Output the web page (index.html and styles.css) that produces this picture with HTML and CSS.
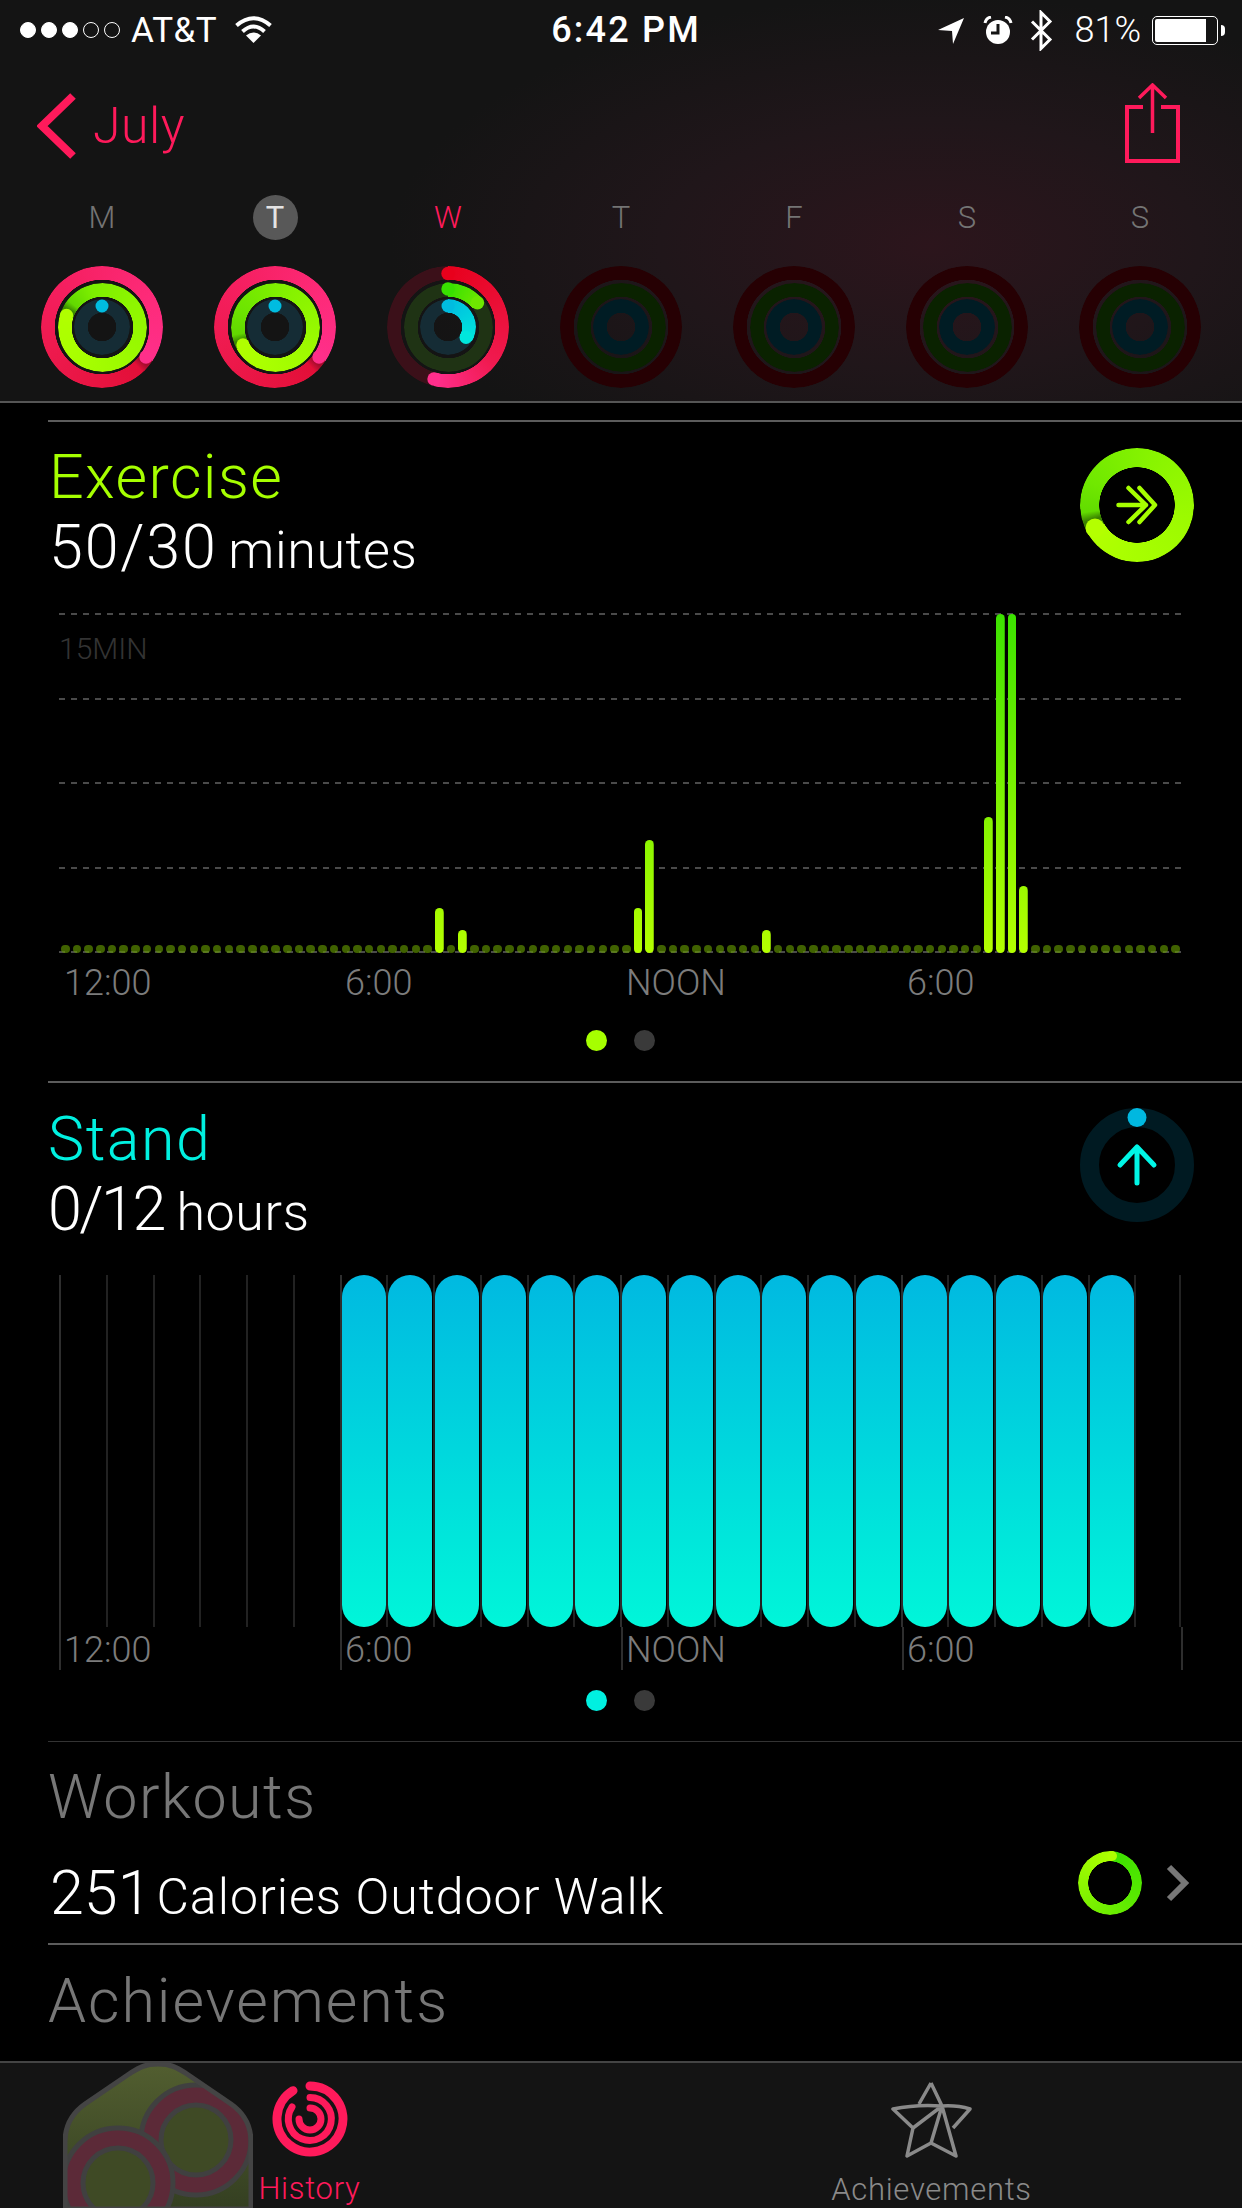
FILE: index.html
```html
<!DOCTYPE html>
<html lang="en">
<head>
<meta charset="utf-8">
<title>Activity</title>
<link rel="stylesheet" href="styles.css">
</head>
<body>
<div class="page">
  <header class="top">
    <div class="status">
      <div class="status-left">
        <span class="sig on"></span><span class="sig on"></span><span class="sig on"></span><span class="sig"></span><span class="sig"></span>
        <span class="carrier">AT&amp;T</span>
        <svg class="wifi" width="37" height="27" viewBox="0 0 37 27"><path d="M1.5 9.5Q18.5-5 35.5 9.5M7.5 15.5Q18.5 5.5 29.5 15.5" fill="none" stroke="#fff" stroke-width="4"/><path d="M18.5 27L11 19.5Q18.5 13.5 26 19.5Z" fill="#fff"/></svg>
      </div>
      <div class="clock">6:42 PM</div>
      <div class="status-right">
        <svg class="loc" width="26" height="26" viewBox="0 0 26 26"><path d="M0 12L26 0L15 26L14 13Z" fill="#fff"/></svg>
        <svg class="alarm" width="30" height="28" viewBox="0 0 30 28"><circle cx="15" cy="16" r="12" fill="#fff"/><path d="M15 8V17H8" fill="none" stroke="#141414" stroke-width="3"/><path d="M2 7Q3 2 8 1M28 7Q27 2 22 1" fill="none" stroke="#fff" stroke-width="3"/></svg>
        <svg class="bt" width="23" height="41" viewBox="0 0 23 41"><path d="M2 11.5L20 29.5L11 38.5V2.5L20 11.5L2 29.5" fill="none" stroke="#fff" stroke-width="3"/></svg>
        <span class="pct">81%</span>
        <div class="batt"><div class="batt-fill"></div></div>
      </div>
    </div>
    <nav class="nav">
      <div class="back">
        <svg width="44" height="70" viewBox="0 0 44 70"><path d="M36 5L5 35L36 65" fill="none" stroke="#ff1a5b" stroke-width="8" stroke-linejoin="miter"/></svg>
        <span class="month">July</span>
      </div>
      <svg class="share" width="59" height="84" viewBox="0 0 59 84"><path d="M20 24H4V78H55V24H38" fill="none" stroke="#ff1a5b" stroke-width="4"/><path d="M29.500 2V50M16 15L29.500 2L43 15" fill="none" stroke="#ff1a5b" stroke-width="3.500"/></svg>
    </nav>
    <div class="week">
      <div class="day">
        <div class="letter">M</div>
        <div class="rings">
          <div class="ring r1 red-m"></div><div class="ring r2 green-m"></div><div class="ring r3 blue-dim"></div>
          <svg class="caps" viewBox="0 0 122 122"><circle cx="105" cy="91" r="6.700" fill="#ff2f8a"/><circle cx="25.500" cy="49.500" r="6.700" fill="#b0ff00"/><circle cx="61" cy="40" r="6.500" fill="#00bce0"/></svg>
        </div>
      </div>
      <div class="day">
        <div class="letter current">T</div>
        <div class="rings">
          <div class="ring r1 red-m"></div><div class="ring r2 green-t"></div><div class="ring r3 blue-dim"></div>
          <svg class="caps" viewBox="0 0 122 122"><circle cx="105" cy="91" r="6.700" fill="#ff2f8a"/><circle cx="29" cy="79" r="6.700" fill="#b0ff00"/><circle cx="61" cy="40" r="6.500" fill="#00bce0"/></svg>
        </div>
      </div>
      <div class="day">
        <div class="letter today">W</div>
        <div class="rings">
          <div class="ring r1 dim-red-w"></div><div class="ring r2 dim-green-w"></div><div class="ring r3 blue-dim"></div>
          <div class="ring r1 red-w"></div><div class="ring r2 green-w"></div><div class="ring r3 blue-w"></div>
          <svg class="caps" viewBox="0 0 122 122"><circle cx="61" cy="7.500" r="6.700" fill="#e8001c"/><circle cx="47" cy="113" r="6.700" fill="#ff2e8c"/><circle cx="61" cy="23" r="6.700" fill="#38e000"/><circle cx="90.500" cy="36.800" r="6.700" fill="#6ee800"/><circle cx="61" cy="40" r="6.500" fill="#00bce0"/><circle cx="79" cy="71.500" r="6.500" fill="#00e6dc"/></svg>
        </div>
      </div>
      <div class="day"><div class="letter">T</div><div class="rings"><div class="ring r1 off-red"></div><div class="ring r2 off-green"></div><div class="ring r3 off-blue"></div></div></div>
      <div class="day"><div class="letter">F</div><div class="rings"><div class="ring r1 off-red"></div><div class="ring r2 off-green"></div><div class="ring r3 off-blue"></div></div></div>
      <div class="day"><div class="letter">S</div><div class="rings"><div class="ring r1 off-red"></div><div class="ring r2 off-green"></div><div class="ring r3 off-blue"></div></div></div>
      <div class="day"><div class="letter">S</div><div class="rings"><div class="ring r1 off-red"></div><div class="ring r2 off-green"></div><div class="ring r3 off-blue"></div></div></div>
    </div>
  </header>

  <main class="content">
    <section class="panel exercise">
      <div class="head">
        <div>
          <div class="title lime">Exercise</div>
          <div class="value"><span>50/30</span> <span class="unit">minutes</span></div>
        </div>
        <div class="badge-ring">
          <div class="ring big lime-ring"></div>
          <svg class="caps" viewBox="0 0 114 114"><circle cx="15" cy="80" r="9.500" fill="#b4ff00"/><path d="M38.500 57H66M48.500 40L66 57L48.500 74M59.500 40L75 57L59.500 74" fill="none" stroke="#a6ff00" stroke-width="4.500" stroke-linecap="round" stroke-linejoin="round"/></svg>
        </div>
      </div>
      <div class="plot">
        <div class="gridlines"><i></i><i></i><i></i><i></i><i></i></div>
        <div class="scale">15MIN</div>
        <div class="bars"><b></b><b></b><b></b><b></b><b></b><b></b><b></b><b></b><b></b><b></b><b></b><b></b><b></b><b></b><b></b><b></b><b></b><b></b><b></b><b></b><b></b><b></b><b></b><b></b><b></b><b></b><b></b><b></b><b></b><b></b><b></b><b></b><b class="act" style="height:45px"></b><b></b><b class="act" style="height:23px"></b><b></b><b></b><b></b><b></b><b></b><b></b><b></b><b></b><b></b><b></b><b></b><b></b><b></b><b></b><b class="act" style="height:45px"></b><b class="act" style="height:113px"></b><b></b><b></b><b></b><b></b><b></b><b></b><b></b><b></b><b></b><b class="act" style="height:23px"></b><b></b><b></b><b></b><b></b><b></b><b></b><b></b><b></b><b></b><b></b><b></b><b></b><b></b><b></b><b></b><b></b><b></b><b></b><b class="act" style="height:136px"></b><b class="act" style="height:339px"></b><b class="act" style="height:339px"></b><b class="act" style="height:67px"></b><b></b><b></b><b></b><b></b><b></b><b></b><b></b><b></b><b></b><b></b><b></b><b></b><b></b></div>
      </div>
      <div class="labels plain"><span>12:00</span><span>6:00</span><span>NOON</span><span>6:00</span></div>
      <div class="pager"><i class="dot-lime"></i><i></i></div>
    </section>

    <section class="panel stand">
      <div class="head">
        <div>
          <div class="title cyan">Stand</div>
          <div class="value"><span class="ratio">0/12</span> <span class="unit">hours</span></div>
        </div>
        <svg class="stand-icon" width="114" height="114" viewBox="0 0 114 114"><circle cx="57" cy="57" r="47.500" fill="none" stroke="#001a22" stroke-width="19"/><circle cx="57" cy="9.500" r="9.500" fill="#00b8e0"/><path d="M57 75V39M40 57L57 39L74 57" fill="none" stroke="#00f6e6" stroke-width="5" stroke-linecap="round" stroke-linejoin="round"/></svg>
      </div>
      <div class="hours">
        <i class="major"></i><i></i><i></i><i></i><i></i><i></i>
        <i class="major"><u></u></i><i><u></u></i><i><u></u></i><i><u></u></i><i><u></u></i><i><u></u></i>
        <i class="major"><u></u></i><i><u></u></i><i><u></u></i><i><u></u></i><i><u></u></i><i><u></u></i>
        <i class="major"><u></u></i><i><u></u></i><i><u></u></i><i><u></u></i><i><u></u></i><i></i>
      </div>
      <div class="labels ticked"><span>12:00</span><span>6:00</span><span>NOON</span><span>6:00</span></div>
      <div class="pager tight"><i class="dot-cyan"></i><i></i></div>
    </section>

    <section class="panel workouts">
      <div class="title muted">Workouts</div>
      <div class="workout-row">
        <div class="value tightv"><span>251</span> <span class="unit">Calories Outdoor Walk</span></div>
        <div class="workout-end">
          <div class="badge-ring small">
            <div class="ring thin walk-ring"></div>
            <svg class="caps" viewBox="0 0 64 64"><circle cx="34" cy="5" r="5" fill="#aeff00"/></svg>
          </div>
          <svg class="chev" width="24" height="38" viewBox="0 0 24 38"><path d="M3 3L19 19L3 35" fill="none" stroke="#777" stroke-width="6"/></svg>
        </div>
      </div>
    </section>

    <section class="panel achievements">
      <div class="title muted">Achievements</div>
    </section>
  </main>

  <footer class="tabs">
    <svg class="medal" width="190" height="147" viewBox="0 0 190 147">
      <defs>
        <linearGradient id="olive" x1="0" y1="0" x2="0" y2="1"><stop offset="0" stop-color="#525e30"/><stop offset="1" stop-color="#343f21"/></linearGradient>
        <clipPath id="hexclip"><path d="M95 2C110 2 116 7 124 12L168 42Q188 56 188 80V147H2V80Q2 56 22 42L66 12C74 7 80 2 95 2Z"/></clipPath>
      </defs>
      <path d="M95 2C110 2 116 7 124 12L168 42Q188 56 188 80V147H2V80Q2 56 22 42L66 12C74 7 80 2 95 2Z" fill="url(#olive)"/>
      <g clip-path="url(#hexclip)">
        <circle cx="133" cy="78" r="45" fill="#3f4a25" stroke="#404040" stroke-width="25"/>
        <circle cx="133" cy="78" r="45" fill="none" stroke="#5c2a38" stroke-width="15"/>
        <circle cx="55" cy="121" r="45" fill="#3f4a25" stroke="#404040" stroke-width="25"/>
        <circle cx="55" cy="121" r="45" fill="none" stroke="#5c2a38" stroke-width="15"/>
      </g>
      <path d="M95 2C110 2 116 7 124 12L168 42Q188 56 188 80V147H2V80Q2 56 22 42L66 12C74 7 80 2 95 2Z" fill="none" stroke="#444" stroke-width="5"/>
    </svg>
    <div class="tab active">
      <svg width="76" height="76" viewBox="0 0 76 76"><g fill="none" stroke="#ff1a5b" stroke-linecap="round"><path d="M38 5A33 33 0 1 1 21 9.700" stroke-width="9"/><path d="M38 16.500A21.500 21.500 0 1 1 20 26" stroke-width="7"/><path d="M38 27A11 11 0 1 1 27 38" stroke-width="7"/></g></svg>
      <span>History</span>
    </div>
    <div class="tab">
      <svg width="81" height="77" viewBox="0 0 81 77"><path d="M40 2L28 23M40 2L51 25L65 75L40 62L16 75L22 47L2 28Q26 23 51 25Q66 24 79 28L62 47M51 25L22 47M51 25L40 62" fill="none" stroke="#8a8a8a" stroke-width="3.500" stroke-linejoin="round"/></svg>
      <span>Achievements</span>
    </div>
  </footer>
</div>
</body>
</html>
```

FILE: styles.css
```css
* { box-sizing: border-box; }
html, body { margin: 0; padding: 0; background: #000; }
body { font-family: Roboto, "Liberation Sans", sans-serif; color: #fff; width: 1242px; height: 2208px; overflow: hidden; }
.page { display: flex; flex-direction: column; width: 1242px; height: 2208px; }

/* Header */
.top {
  height: 403px;
  border-bottom: 2px solid #555;
  background: radial-gradient(ellipse 540px 250px at 930px 245px, #2c151c 0%, #20161a 50%, #141414 100%), #141414;
}
.status { display: grid; grid-template-columns: 1fr auto 1fr; align-items: center; height: 60px; padding: 0 24px 0 20px; font-size: 36px; }
.status-left, .status-right { display: flex; align-items: center; }
.status-right { justify-content: flex-end; }
.sig { width: 16px; height: 16px; border-radius: 50%; border: 1.5px solid #fff; margin-right: 5px; }
.sig.on { background: #fff; }
.carrier { margin-left: 6px; font-size: 35px; font-weight: 400; letter-spacing: .5px; }
.wifi { margin-left: 18px; margin-top: -1px; }
.clock { font-weight: 500; font-size: 36px; letter-spacing: 2.2px; padding-left: 14px; }
.loc { margin-right: 19px; margin-top: 1px; }
.alarm { margin-right: 17px; }
.bt { margin-right: 21px; }
.pct { font-weight: 300; margin-right: 11px; }
.batt { position: relative; width: 66px; height: 29px; border: 1.5px solid #fff; border-radius: 5px; padding: 2px; }
.batt::after { content: ""; position: absolute; right: -8px; top: 8px; width: 4px; height: 11px; background: #fff; border-radius: 0 4px 4px 0; }
.batt-fill { width: 51px; height: 100%; background: #fff; border-radius: 2px 0 0 2px; }

.nav { display: flex; justify-content: space-between; height: 130px; padding: 21px 60px 0 37px; }
.back { display: flex; align-items: flex-start; }
.back svg { margin-top: 10px; }
.month { color: #ff1a5b; font-size: 50px; font-weight: 300; line-height: 56px; margin: 17px 0 0 12px; letter-spacing: .5px; }
.share { margin-top: 2px; }

.week { display: grid; grid-template-columns: repeat(7, 173px); padding: 5px 0 0 15.5px; }
.day { display: flex; flex-direction: column; align-items: center; }
.letter { width: 45px; height: 45px; border-radius: 50%; font-size: 31px; font-weight: 300; line-height: 45px; text-align: center; color: #747474; }
.letter.current { background: #585858; color: #e4e4e4; font-weight: 400; }
.letter.today { color: #ff1a5b; font-weight: 300; }

/* Rings */
.rings { position: relative; width: 122px; height: 122px; margin-top: 26px; }
.ring {
  --t: 13.5px;
  position: absolute;
  border-radius: 50%;
  -webkit-mask: radial-gradient(closest-side, transparent calc(100% - var(--t) - .5px), #000 calc(100% - var(--t)));
  mask: radial-gradient(closest-side, transparent calc(100% - var(--t) - .5px), #000 calc(100% - var(--t)));
}
.r1 { inset: 0; }
.r2 { inset: 16.5px; }
.r3 { inset: 33px; }
.caps { position: absolute; inset: 0; width: 100%; height: 100%; }

.red-m { background: conic-gradient(from 124deg, #a50c2c 0deg 7deg, #e30f38 14deg, #ee1a4e 125deg, #f51f60 195deg, #fd2a78 290deg, #ff2f8a 360deg); }
.green-m { background: conic-gradient(from 288deg, #3c8a00 0deg 10deg, #62d800 20deg, #7cee00 55deg, #8ef600 125deg, #9cfa00 215deg, #aaff00 305deg, #b0ff00 360deg); }
.green-t { background: conic-gradient(from 240deg, #3c8a00 0deg 10deg, #62d800 20deg, #6ce400 55deg, #86f200 145deg, #9cfa00 235deg, #aaff00 315deg, #b0ff00 360deg); }
.blue-dim { background: #152c35; }
.dim-red-w { background: #3b1019; }
.dim-green-w { background: #1f3314; }
.red-w { background: conic-gradient(#e8001c 0deg, #ea1038 70deg, #f01a50 130deg, #ff2e8c 193deg, transparent 193deg); }
.green-w { background: conic-gradient(#38e000 0deg, #6ee800 51deg, transparent 51deg); }
.blue-w { background: conic-gradient(#00bce0 0deg, #00e6dc 121deg, transparent 121deg); }
.off-red { background: #260003; }
.off-green { background: #0a2200; }
.off-blue { background: #001c24; }

/* Panels */
.content { padding: 17px 0 0 48px; }
.panel { border-top: 2px solid #5c5c5c; }
.head { display: flex; justify-content: space-between; align-items: flex-start; padding: 20px 48px 0 0; }
.stand .head { padding-top: 21px; }
.title, .value { font-size: 61px; font-weight: 300; height: 70px; line-height: 70px; letter-spacing: 1.5px; white-space: nowrap; }
.value { letter-spacing: 1.8px; }
.lime { color: #a6ff00; padding-left: 1px; letter-spacing: 1.4px; }
.cyan { color: #00f0e0; }
.muted { color: #777; }
.achievements .title { letter-spacing: 1.9px; }
.value .unit { font-size: 52px; margin-left: -6px; letter-spacing: .6px; }
.value .ratio { letter-spacing: -2.5px; }
.stand .value .unit { margin-left: -4px; }
.exercise .value { padding-left: 1px; }
.badge-ring { position: relative; width: 114px; height: 114px; margin-top: 6px; }
.ring.big { --t: 19px; inset: 0; }
.lime-ring { background: conic-gradient(from 241deg, #3a8000 0deg 11deg, #62dc00 21deg, #70e800 55deg, #88f400 137deg, #9cfa00 223deg, #aaff00 317deg, #b4ff00 360deg); }
.stand-icon { margin-top: 4px; }

.plot { display: grid; width: 1122px; height: 340px; margin: 31px 0 0 11px; }
.plot > * { grid-area: 1 / 1; }
.gridlines { display: flex; flex-direction: column; justify-content: space-between; }
.gridlines i { display: block; height: 2px; background: repeating-linear-gradient(90deg, #4a4a4a 0 6px, transparent 6px 12px); }
.scale { align-self: start; margin-top: 18px; font-size: 30px; font-weight: 300; line-height: 36px; color: #333; }
.bars { display: flex; justify-content: space-between; align-items: flex-end; padding: 0 0 0 2px; }
.bars b { display: block; width: 8.5px; height: 8px; border-radius: 4.5px; background: rgba(98,150,0,.65); }
.bars b.act { background: linear-gradient(to top, #b4ff00, #3ce200) bottom / 100% 339px no-repeat; }

.labels { display: grid; grid-template-columns: repeat(4, 281px); width: 1124px; margin-left: 11px; font-size: 36px; font-weight: 300; color: #7c7c7c; line-height: 42px; }
.labels.plain { margin-top: 9px; }
.labels.plain span { padding-left: 5px; }
.labels.ticked span { border-left: 2px solid #2e2e2e; height: 43px; padding-left: 3px; line-height: 47px; }
.labels.ticked span:last-child { border-right: 2px solid #2e2e2e; }

.pager { display: flex; gap: 27px; padding: 26px 0 30px 537.5px; }
.pager i { display: block; width: 21px; height: 21px; border-radius: 50%; background: #3a3a3a; }
.pager .dot-lime { background: #a6ff00; }
.pager .dot-cyan { background: #00f0e0; }
.pager.tight { padding-top: 20px; padding-bottom: 30px; }

.hours { display: grid; grid-template-columns: repeat(24, 46.75px); width: 1122px; height: 352px; margin: 31px 0 0 11px; }
.hours i { display: block; border-left: 2px solid #222; }
.hours i.major { border-left-color: #2e2e2e; }
.hours i:last-child { border-right: 2px solid #222; }
.hours u { display: block; height: 100%; margin-right: .75px; border-radius: 23px; background: linear-gradient(#00b9e1, #00f6d9); }

.workouts { border-top: 1px solid #333; padding-top: 20px; }
.workout-row { display: flex; justify-content: space-between; align-items: flex-start; margin-top: 26px; padding: 0 52px 15px 0; }
.tightv { padding-left: 2px; letter-spacing: 0; }
.value.tightv .unit { font-size: 50px; margin-left: -10px; letter-spacing: 1px; }
.workout-end { display: flex; align-items: center; margin-top: -7px; }
.badge-ring.small { width: 64px; height: 64px; margin: 0 24px 0 0; }
.ring.thin { --t: 10px; inset: 0; }
.walk-ring { background: conic-gradient(from 5deg, #3ce000, #56e800 30%, #7af000 60%, #9cfb00 85%, #aeff00); }
.achievements { padding-top: 21px; }

/* Tab bar */
.tabs { position: relative; flex: 1; margin-top: 25px; min-height: 0; display: grid; grid-template-columns: 1fr 1fr; background: #141414; border-top: 2px solid #444; padding-top: 18px; overflow: hidden; }
.medal { position: absolute; left: 63px; top: -1px; }
.tab { position: relative; display: flex; flex-direction: column; align-items: center; color: #8a8a8a; font-size: 31px; font-weight: 300; letter-spacing: .7px; }
.tab span { line-height: 36px; margin-top: 14px; }
.tab svg { display: block; }
.tab.active { color: #ff1a5b; margin-left: -2px; }
```
